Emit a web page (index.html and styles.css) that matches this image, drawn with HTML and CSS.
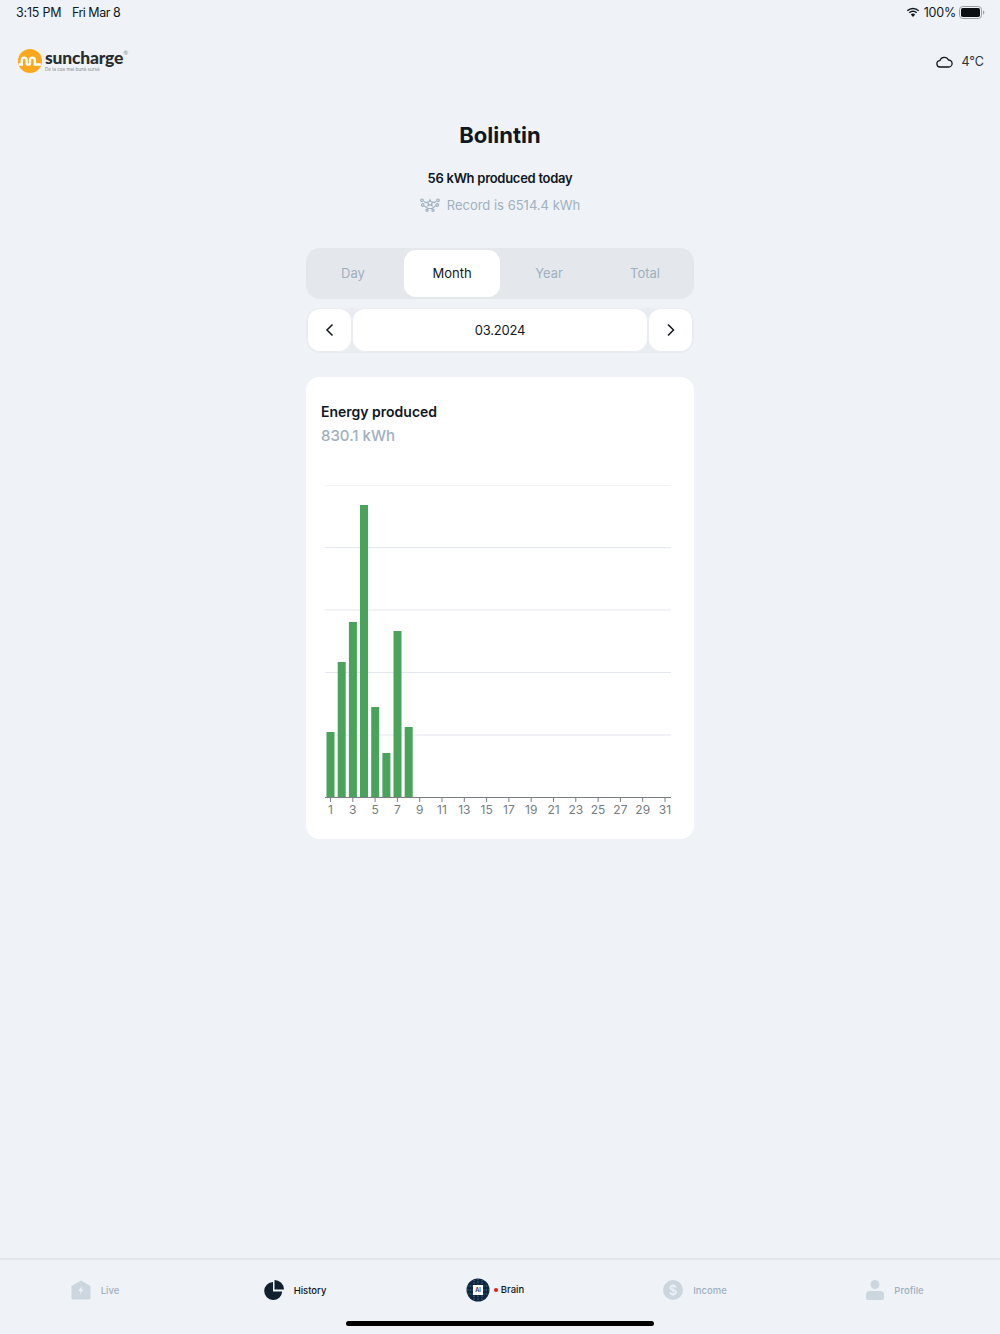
FILE: index.html
```html
<!DOCTYPE html>
<html lang="en">
<head>
<meta charset="utf-8">
<title>Suncharge – Bolintin</title>
<link rel="stylesheet" href="styles.css">
</head>
<body>
<div class="app">
  <div class="status">
    <div class="status-left"><span>3:15 PM</span><span class="status-date">Fri Mar 8</span></div>
    <div class="status-right">
      <svg class="wifi" width="14" height="11" viewBox="0 0 14 11"><path d="M7 2.200c2 0 3.800.8 5.200 2.100l1-1.100A9 9 0 0 0 7 .7 9 9 0 0 0 .8 3.200l1 1.100A7.500 7.500 0 0 1 7 2.200z" fill="#10171f"/><path d="M7 5c1.200 0 2.300.5 3.200 1.300l1-1.100A6 6 0 0 0 7 3.500a6 6 0 0 0-4.200 1.700l1 1.100A4.600 4.600 0 0 1 7 5z" fill="#10171f"/><path d="M7 6.500c-.9 0-1.700.3-2.200.9L7 10l2.200-2.600A3.200 3.200 0 0 0 7 6.500z" fill="#10171f"/></svg>
      <span>100%</span>
      <svg class="battery" width="26" height="13" viewBox="0 0 26 13"><rect x=".5" y=".5" width="22" height="12" rx="3.200" fill="none" stroke="#9a9fa4"/><rect x="2" y="2" width="19" height="9" rx="1.800" fill="#0b0f14"/><path d="M24 4.500c.8.200 1.300 1 1.300 2s-.5 1.800-1.300 2z" fill="#9a9fa4"/></svg>
    </div>
  </div>

  <header class="topbar">
    <div class="logo">
      <svg width="24" height="24" viewBox="0 0 24 24"><circle cx="12" cy="12" r="12" fill="#fba81e"/><path d="M0.800 15.500h3V11a2.400 2.400 0 0 1 4.800 0v3a1.700 1.700 0 0 0 3.400 0v-3a2.400 2.400 0 0 1 4.800 0v4.500h6" fill="none" stroke="#fff" stroke-width="2.300"/></svg>
      <div class="logo-text">
        <div class="logo-name"><span>suncharge</span><span class="logo-reg">®</span></div>
        <div class="logo-tag">De la cea mai bună sursă</div>
      </div>
    </div>
    <div class="weather">
      <svg width="17" height="12" viewBox="0 0 17 12"><path d="M4.300 11A3.200 3.200 0 0 1 3.900 4.600 4.600 4.600 0 0 1 12.500 4a3.500 3.500 0 0 1 .2 7z" fill="none" stroke="#10171f" stroke-width="1.300" stroke-linejoin="round"/></svg>
      <span>4°C</span>
    </div>
  </header>

  <main class="content">
    <h1 class="title">Bolintin</h1>
    <p class="today">56 kWh produced today</p>
    <p class="record">
      <svg width="20" height="14" viewBox="0 0 20 14" fill="none" stroke="#9fb0bf" stroke-width="1.200"><path d="M10 1.800l1 2 2.100.3-1.500 1.500.4 2.100-2-1-2 1 .4-2.100-1.500-1.500 2.100-.3z"/><circle cx="2" cy="2.300" r="1.300"/><circle cx="18" cy="2.300" r="1.300"/><circle cx="2.800" cy="7" r="1.300"/><circle cx="17.200" cy="7" r="1.300"/><path d="M4 3.500l2.500 1.500M16 3.500L13.500 5M4.500 8l3.500 2.500h4L15.500 8"/><circle cx="7" cy="12.300" r="1.100"/><circle cx="13" cy="12.300" r="1.100"/></svg>
      <span>Record is 6514.4 kWh</span>
    </p>

    <div class="tabs">
      <div class="tab tab-first">Day</div>
      <div class="tab tab-active">Month</div>
      <div class="tab">Year</div>
      <div class="tab">Total</div>
    </div>

    <div class="date-row">
      <div class="date-btn"><svg width="10" height="14" viewBox="0 0 10 14"><path d="M7.500 1.500L2 7l5.500 5.500" fill="none" stroke="#10171f" stroke-width="1.500"/></svg></div>
      <div class="date-value">03.2024</div>
      <div class="date-btn"><svg width="10" height="14" viewBox="0 0 10 14"><path d="M2 1.500L7.500 7 2 12.500" fill="none" stroke="#10171f" stroke-width="1.500"/></svg></div>
    </div>

    <section class="card">
      <h2 class="card-title">Energy produced</h2>
      <div class="card-value">830.1 kWh</div>
      <svg class="chart" width="388" height="354" viewBox="306 485 388 354">
        <g class="grid">
          <line x1="325" x2="671" y1="485" y2="485"/>
          <line x1="325" x2="671" y1="547.500" y2="547.500"/>
          <line x1="325" x2="671" y1="610" y2="610"/>
          <line x1="325" x2="671" y1="672.500" y2="672.500"/>
          <line x1="325" x2="671" y1="735" y2="735"/>
        </g>
        <g class="bars">
          <rect x="326.500" y="732" width="8" height="65"/>
          <rect x="337.700" y="662" width="8" height="135"/>
          <rect x="348.900" y="622" width="8" height="175"/>
          <rect x="360" y="505" width="8" height="292"/>
          <rect x="371.200" y="707" width="8" height="90"/>
          <rect x="382.400" y="753" width="8" height="44"/>
          <rect x="393.500" y="631" width="8" height="166"/>
          <rect x="404.700" y="727" width="8" height="70"/>
        </g>
        <line class="axis" x1="325" x2="671" y1="797.500" y2="797.500"/>
        <g class="ticks">
          <path d="M330.500 797v5M352.800 797v5M375.100 797v5M397.400 797v5M419.700 797v5M442 797v5M464.300 797v5M486.600 797v5M508.900 797v5M531.200 797v5M553.500 797v5M575.800 797v5M598.100 797v5M620.400 797v5M642.700 797v5M665 797v5"/>
        </g>
        <g class="labels">
          <text x="330.500" y="814">1</text><text x="352.800" y="814">3</text><text x="375.100" y="814">5</text><text x="397.400" y="814">7</text><text x="419.700" y="814">9</text><text x="442" y="814">11</text><text x="464.300" y="814">13</text><text x="486.600" y="814">15</text><text x="508.900" y="814">17</text><text x="531.200" y="814">19</text><text x="553.500" y="814">21</text><text x="575.800" y="814">23</text><text x="598.100" y="814">25</text><text x="620.400" y="814">27</text><text x="642.700" y="814">29</text><text x="665" y="814">31</text>
        </g>
      </svg>
    </section>
  </main>

  <nav class="nav">
    <div class="nav-item">
      <svg width="20" height="20" viewBox="0 0 20 20"><path d="M10 .5l9.500 5.500v12a1.500 1.500 0 0 1-1.500 1.500H2A1.500 1.500 0 0 1 .5 18V6z" fill="#ccd6df"/><path d="M10.800 6L7.500 11h2.200l-.6 3.500 3.300-5h-2.200z" fill="#eff3f7"/></svg>
      <span>Live</span>
    </div>
    <div class="nav-item nav-active">
      <svg width="20" height="20" viewBox="0 0 20 20"><path d="M9 2A9 9 0 1 0 18.200 11.500H9z" fill="#10202e"/><path d="M10.500 0a9.500 9.500 0 0 1 9.500 9.500h-9.500z" fill="#10202e"/></svg>
      <span>History</span>
    </div>
    <div class="nav-item nav-active nav-brain">
      <svg width="24" height="24" viewBox="0 0 24 24"><circle cx="12" cy="12" r="11.500" fill="#10253f"/><path d="M12 .5v6M12 17.500v6M1 8h6M1 12h6M1 16h6M17 8h6M17 12h6M17 16h6M8 1.500v5M16 1.500v5M8 17.500v5M16 17.500v5" stroke="#5f8fa8" stroke-width=".7" stroke-dasharray="1.500 1.200"/><rect x="7" y="7" width="10" height="10" fill="#fff"/><text class="ai" x="12" y="14">AI</text></svg>
      <i class="dot"></i>
      <span>Brain</span>
    </div>
    <div class="nav-item">
      <svg width="20" height="20" viewBox="0 0 20 20"><circle cx="10" cy="10" r="10" fill="#ccd6df"/><text class="dollar" x="10" y="14.500">$</text></svg>
      <span>Income</span>
    </div>
    <div class="nav-item">
      <svg width="18" height="20" viewBox="0 0 18 20"><circle cx="9" cy="4.500" r="4.500" fill="#ccd6df"/><path d="M0 15a4 4 0 0 1 4-4h10a4 4 0 0 1 4 4v3a2 2 0 0 1-2 2H2a2 2 0 0 1-2-2z" fill="#ccd6df"/></svg>
      <span>Profile</span>
    </div>
  </nav>
  <div class="home-indicator"></div>
</div>
</body>
</html>
```
FILE: styles.css
```css
* { box-sizing: border-box; }
html, body { margin: 0; padding: 0; }
body { background: #eff3f7; color: #10171f; font-family: Inter, "Liberation Sans", sans-serif; }
.app { position: relative; width: 1000px; height: 1334px; display: flex; flex-direction: column; overflow: hidden; }

.status { height: 24px; padding: 0 15px 0 16px; display: flex; justify-content: space-between; align-items: center; font-size: 12.500px; letter-spacing: -0.2px; }
.status-left { display: flex; gap: 10.500px; }
.status-date { letter-spacing: -0.5px; }
.status-right { display: flex; align-items: center; gap: 3px; }
.wifi { margin-right: 1px; }

.topbar { height: 74px; padding: 0 16px 0 18px; display: flex; justify-content: space-between; align-items: flex-start; }
.logo { display: flex; gap: 3px; align-items: center; margin-top: 25px; }
.logo-text { display: flex; flex-direction: column; }
.logo-name { display: flex; align-items: flex-start; font-family: Lato, sans-serif; font-weight: 900; font-size: 17.500px; line-height: 18px; letter-spacing: -0.2px; color: #2a2d30; }
.logo-reg { font-size: 6px; line-height: 8px; font-weight: 400; letter-spacing: 0; color: #8b8f93; }
.logo-tag { font-size: 4.600px; line-height: 6px; color: #85898d; }
.weather { display: flex; align-items: center; gap: 8px; margin-top: 28px; font-size: 12.500px; line-height: 20px; color: #2a3138; }

.content { width: 388px; margin: 0 auto; display: flex; flex-direction: column; align-items: stretch; }
.title { margin: 21px 0 0; text-align: center; font-size: 22px; line-height: 32px; font-weight: 700; }
.today { margin: 17px 0 0; text-align: center; font-size: 13px; line-height: 20px; font-weight: 600; letter-spacing: -0.28px; }
.record { margin: 7px 0 0; display: flex; justify-content: center; align-items: center; gap: 7px; font-size: 13px; line-height: 20px; color: #9fb0bf; }

.tabs { margin-top: 33px; height: 51px; padding: 2px 0; background: #e4e8ec; border-radius: 14px; display: grid; grid-template-columns: 98px 96px 98px 94px; }
.tab { display: flex; align-items: center; justify-content: center; padding-bottom: 1px; font-size: 13px; color: #9fb0bf; border-radius: 12px; }
.tab-first { padding-right: 4px; }
.tab-active { background: #fff; color: #10171f; }

.date-row { margin-top: 9px; height: 45px; padding: 1px 2px 2px; border-radius: 14px; background: #e9edf1; display: flex; gap: 2px; }
.date-btn { width: 43px; background: #fff; border-radius: 12px; display: flex; align-items: center; justify-content: center; }
.date-value { flex: 1; background: #fff; border-radius: 12px; display: flex; align-items: center; justify-content: center; font-size: 13px; letter-spacing: -0.2px; color: #10171f; }

.card { margin-top: 24px; height: 462px; background: #fff; border-radius: 14px; padding-top: 25px; }
.card-title { margin: 0 15px; font-size: 14px; line-height: 20px; font-weight: 600; }
.card-value { margin: 2px 15px 0; font-size: 15px; line-height: 24px; font-weight: 500; color: #9fb0bf; }
.chart { display: block; margin-top: 37px; }
.grid line { stroke: #e3e7f0; stroke-width: 1; }
.bars rect { fill: #4aa35a; }
.axis { stroke: #7a7f85; stroke-width: 1; }
.ticks path { stroke: #7a7f85; stroke-width: 1; fill: none; }
.labels text { font-family: Inter, sans-serif; font-size: 12px; fill: #777c82; text-anchor: middle; }

.nav { margin-top: auto; height: 76px; border-top: 2px solid #e2e6ea; display: grid; grid-template-columns: repeat(5, 200px); }
.nav-item { padding: 0 10px 14px 0; display: flex; align-items: center; justify-content: center; gap: 10px; font-size: 9.500px; font-weight: 500; color: #9fb0bf; }
.nav-active { color: #10171f; }
.nav-brain { gap: 0; padding-bottom: 15px; }
.nav-brain span { margin-left: 1px; }
.dot { width: 4px; height: 4px; border-radius: 50%; background: #f0141e; margin-left: 4px; margin-right: 2px; }
.ai { font-family: Inter, sans-serif; font-size: 5.500px; text-anchor: middle; fill: #223; font-weight: 600; }
.dollar { font-family: Inter, sans-serif; font-size: 13px; text-anchor: middle; fill: #eff3f7; }
.home-indicator { position: absolute; left: 346px; top: 1321px; width: 308px; height: 5px; border-radius: 3px; background: #000; }
```
